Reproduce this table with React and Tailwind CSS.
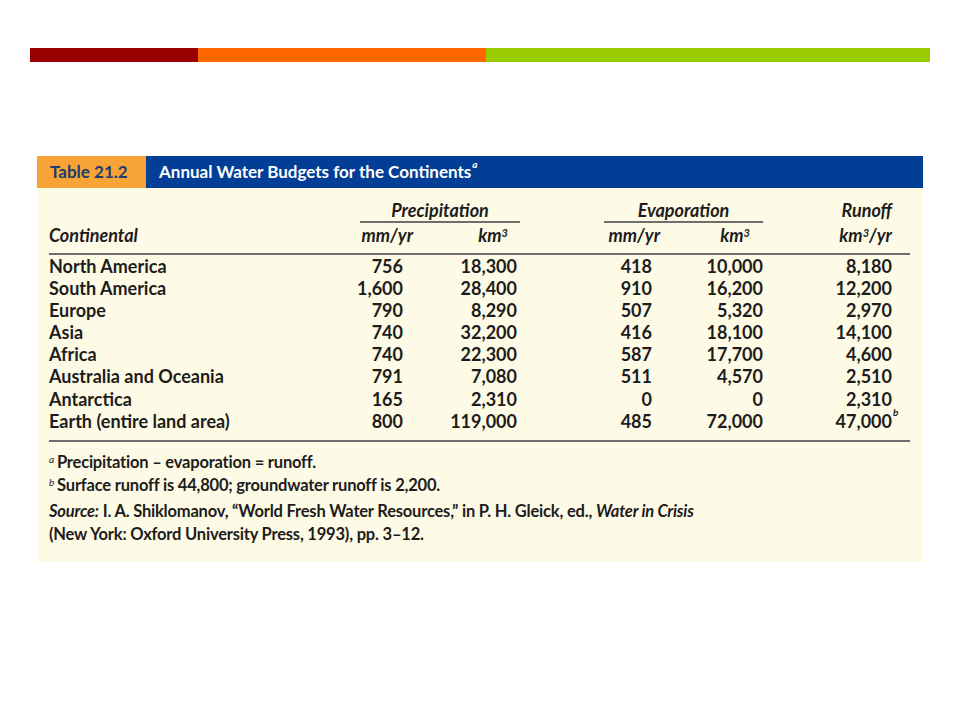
const rows = [
  ["North America", "756", "18,300", "418", "10,000", "8,180"],
  ["South America", "1,600", "28,400", "910", "16,200", "12,200"],
  ["Europe", "790", "8,290", "507", "5,320", "2,970"],
  ["Asia", "740", "32,200", "416", "18,100", "14,100"],
  ["Africa", "740", "22,300", "587", "17,700", "4,600"],
  ["Australia and Oceania", "791", "7,080", "511", "4,570", "2,510"],
  ["Antarctica", "165", "2,310", "0", "0", "2,310"],
  ["Earth (entire land area)", "800", "119,000", "485", "72,000", "47,000"],
];

const cols = "grid grid-cols-[291px_73px_107px_140px_103px_147px]";

export default function App() {
  return (
    <div className="w-[960px] h-[720px] bg-white pt-[48px] font-['Lato',sans-serif] text-[#1e1c1c]">
      <div className="flex h-[14px] ml-[30px] w-[900px]">
        <div className="w-[168px] bg-[#990000]" />
        <div className="w-[288px] bg-[#ff6600]" />
        <div className="flex-1 bg-[#99cc00]" />
      </div>

      <div className="mt-[94px] ml-[37px] w-[886px] bg-[#fdfbe6] pb-[16px]">
        <div className="flex h-[32px] items-center">
          <div className="w-[109px] h-full bg-[#f7a335] flex items-center pl-[13px] text-[17px] font-bold text-[#1d3a72]">
            Table 21.2
          </div>
          <div className="flex-1 h-full bg-[#023e96] flex items-center pl-[13px] text-[17px] font-bold text-white">
            Annual Water Budgets for the Continents
            <sup className="italic text-[10px] ml-[1px] -mt-[6px]">a</sup>
          </div>
        </div>

        <div className="ml-[12px] w-[861px] pt-[10px]">
          {/* group headings */}
          <div className={cols + " italic font-bold text-[18px]"}>
            <div />
            <div className="col-span-2 pl-[20px]">
              <div className="h-[25px] leading-[24px] text-center border-b-2 border-[#6e6e6e]">Precipitation</div>
            </div>
            <div className="col-span-2 pl-[84px]">
              <div className="h-[25px] leading-[24px] text-center border-b-2 border-[#6e6e6e]">Evaporation</div>
            </div>
            <div className="text-right pr-[18px] leading-[24px]">Runoff</div>
          </div>

          {/* unit headings */}
          <div className={cols + " italic font-bold text-[18px] leading-[22px] pt-[1px] pb-[7px] border-b-2 border-[#6e6e6e]"}>
            <div>Continental</div>
            <div className="text-right">mm/yr</div>
            <div className="text-right pr-[12px]">
              km<sup className="text-[11px]">3</sup>
            </div>
            <div className="text-right">mm/yr</div>
            <div className="text-right pr-[13px]">
              km<sup className="text-[11px]">3</sup>
            </div>
            <div className="text-right pr-[18px]">
              km<sup className="text-[11px]">3</sup>/yr
            </div>
          </div>

          {/* data */}
          <div className="pb-[8px] border-b-2 border-[#6e6e6e] font-bold text-[18px]">
            {rows.map((r, i) => (
              <div key={i} className={cols + " h-[22.1px] leading-[22px]"}>
                <div>{r[0]}</div>
                <div className="text-right pr-[10px]">{r[1]}</div>
                <div className="text-right pr-[3px]">{r[2]}</div>
                <div className="text-right pr-[8px]">{r[3]}</div>
                <div className="text-right">{r[4]}</div>
                <div className="text-right pr-[18px]">
                  {i === rows.length - 1 ? (
                    <span className="relative">
                      {r[5]}
                      <sup className="absolute left-full top-[2px] italic text-[10px] ml-[1px]">b</sup>
                    </span>
                  ) : (
                    r[5]
                  )}
                </div>
              </div>
            ))}
          </div>

          {/* footnotes */}
          <div className="pt-[9px] text-[16.5px] font-bold tracking-[-0.2px] leading-[23px]">
            <div>
              <sup className="italic font-normal text-[10px] mr-[3px]">a</sup>Precipitation – evaporation = runoff.
            </div>
            <div>
              <sup className="italic font-normal text-[10px] mr-[3px]">b</sup>Surface runoff is 44,800; groundwater runoff is 2,200.
            </div>
            <div className="mt-[3px]">
              <i>Source:</i> I. A. Shiklomanov, “World Fresh Water Resources,” in P. H. Gleick, ed., <i>Water in Crisis</i>
            </div>
            <div>(New York: Oxford University Press, 1993), pp. 3–12.</div>
          </div>
        </div>
      </div>
    </div>
  );
}
